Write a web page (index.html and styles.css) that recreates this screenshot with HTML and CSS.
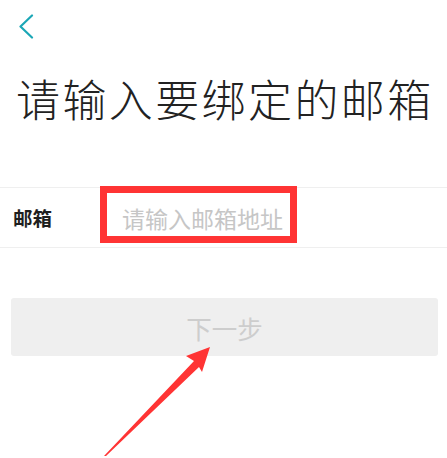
FILE: index.html
```html
<!DOCTYPE html>
<html lang="zh-CN">
<head>
<meta charset="utf-8">
<title>绑定邮箱</title>
<link rel="stylesheet" href="styles.css">
</head>
<body>
<div class="page">
  <header class="nav">
    <svg class="back" width="16" height="25" viewBox="0 0 16 25">
      <polyline points="14,1.5 2.5,12.5 14,23.5" fill="none" stroke="#1ba7b6" stroke-width="2.2" stroke-linecap="round" stroke-linejoin="round"/>
    </svg>
  </header>
  <h1 class="title">请输入要绑定的邮箱</h1>
  <div class="field">
    <span class="label">邮箱</span>
    <span class="placeholder">请输入邮箱地址</span>
    <div class="highlight"></div>
  </div>
  <div class="btn">下一步</div>
  <svg class="arrow" width="120" height="120" viewBox="100 340 120 120">
    <polygon points="210,347 186,356 194,361 104,456 106,456 199,367 202,372" fill="#ff3434"/>
  </svg>
</div>
</body>
</html>
```
FILE: styles.css
```css
html, body {
  margin: 0;
  padding: 0;
  background: #ffffff;
}
.page {
  position: relative;
  width: 447px;
  height: 458px;
  overflow: hidden;
  font-family: "Noto Sans CJK SC", "Noto Sans", sans-serif;
}
.nav {
  height: 52px;
  display: flex;
  align-items: flex-start;
}
.back {
  margin-left: 18px;
  margin-top: 14px;
  display: block;
}
.title {
  margin: 20px 0 0 0;
  padding-left: 16px;
  font-size: 44px;
  line-height: 52px;
  height: 52px;
  font-weight: 300;
  letter-spacing: 2.4px;
  color: #222222;
  white-space: nowrap;
}
.field {
  position: relative;
  margin-top: 63px;
  height: 59px;
  border-top: 1px solid #efefef;
  border-bottom: 1px solid #efefef;
  display: flex;
  align-items: center;
}
.label {
  width: 122px;
  padding-left: 13px;
  box-sizing: border-box;
  font-size: 19.5px;
  font-weight: 700;
  color: #1e1e1e;
}
.placeholder {
  font-size: 23px;
  color: #c6c6c6;
  letter-spacing: 0;
}
.highlight {
  position: absolute;
  left: 100px;
  top: -2px;
  width: 197px;
  height: 57px;
  box-sizing: border-box;
  border: 7px solid #ff3434;
}
.btn {
  margin: 50px 9px 0 11px;
  height: 58px;
  border-radius: 3px;
  background: #efefef;
  color: #cdcdcd;
  font-size: 25.5px;
  display: flex;
  align-items: center;
  justify-content: center;
}
.arrow {
  position: absolute;
  left: 100px;
  top: 340px;
}
```
